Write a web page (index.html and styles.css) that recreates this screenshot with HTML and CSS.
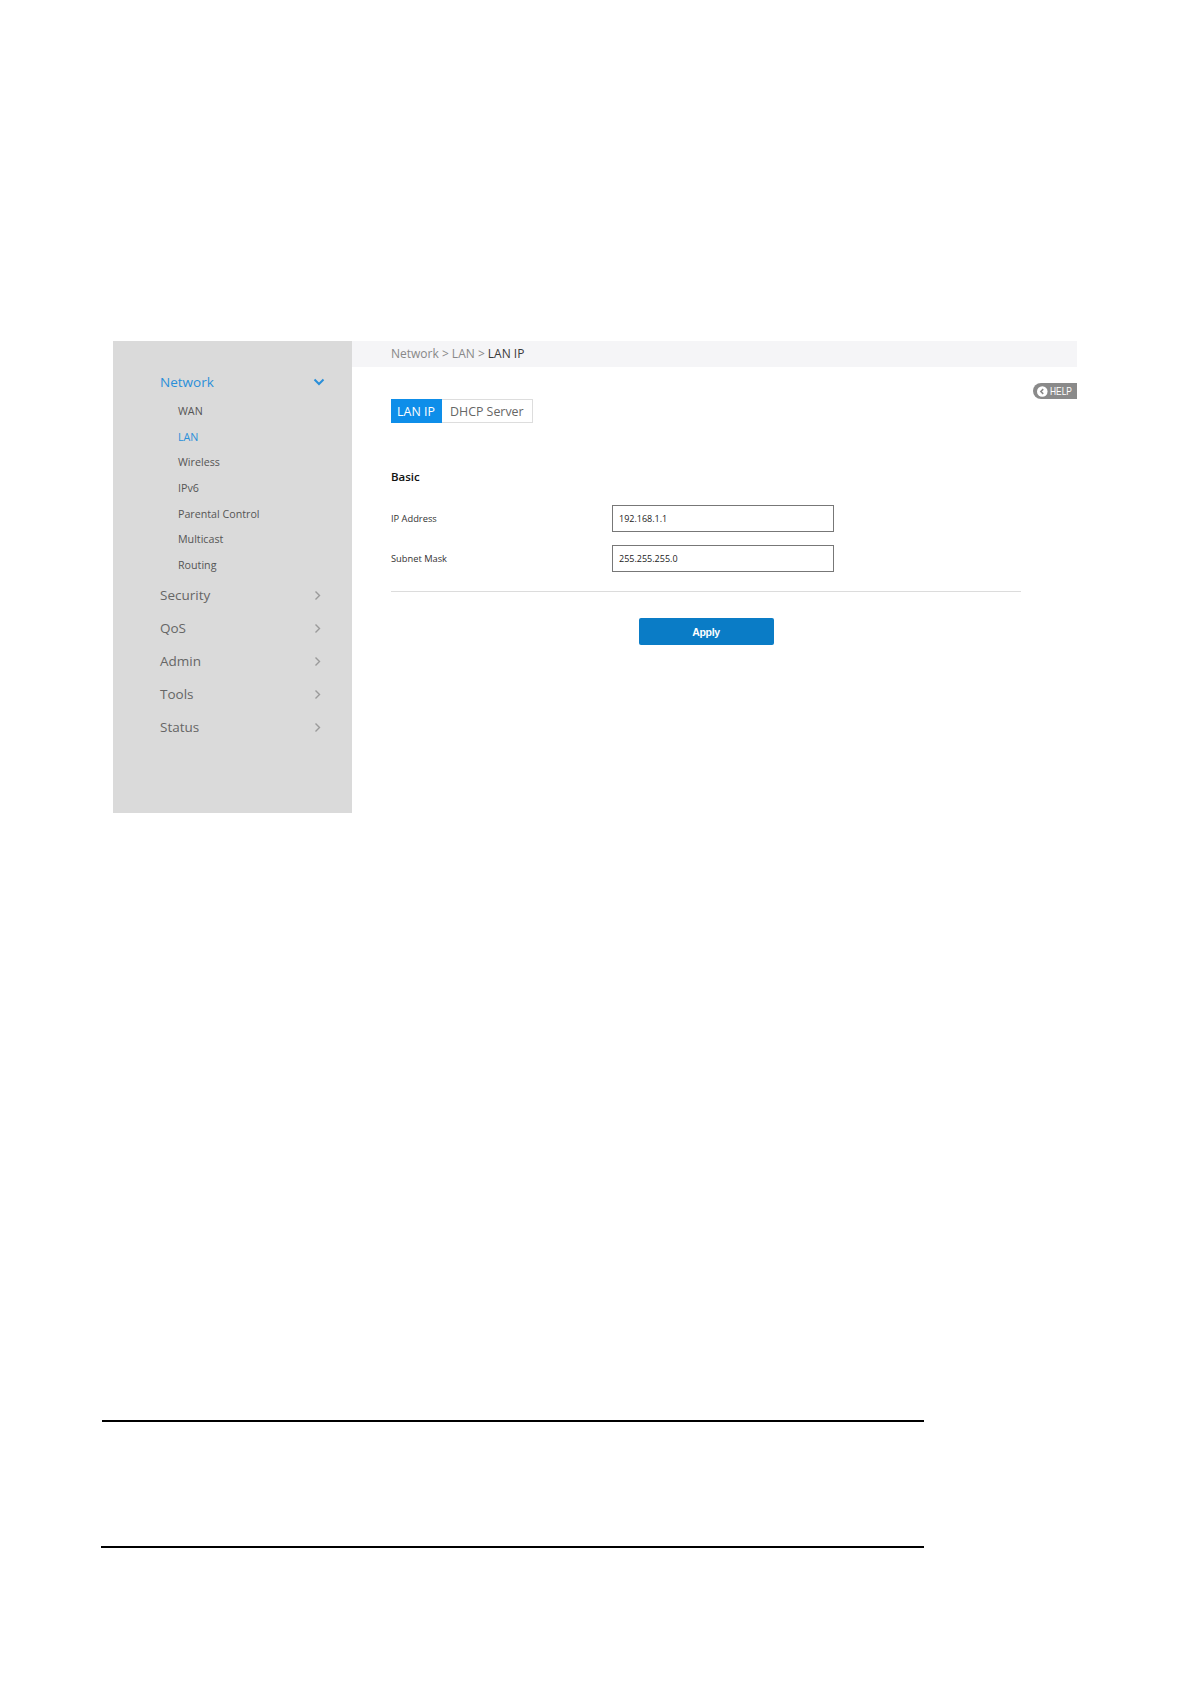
FILE: index.html
```html
<!DOCTYPE html>
<html>
<head>
<meta charset="utf-8">
<link rel="stylesheet" href="styles.css">
</head>
<body>
<div class="page">
  <div class="ui">
    <nav class="sidebar">
      <div class="menu-head active">
        <span>Network</span>
        <svg class="chev-down" width="12" height="8" viewBox="0 0 12 8"><path d="M1.5 1.5 L6 6 L10.5 1.5" fill="none" stroke="#2a8fd9" stroke-width="2"/></svg>
      </div>
      <ul class="submenu">
        <li>WAN</li>
        <li class="sel">LAN</li>
        <li>Wireless</li>
        <li>IPv6</li>
        <li>Parental Control</li>
        <li>Multicast</li>
        <li>Routing</li>
      </ul>
      <div class="menu-head"><span>Security</span><svg class="chev-right" width="7" height="11" viewBox="0 0 7 11"><path d="M1.5 1.5 L5.5 5.5 L1.5 9.5" fill="none" stroke="#9a9a9a" stroke-width="1.4"/></svg></div>
      <div class="menu-head"><span>QoS</span><svg class="chev-right" width="7" height="11" viewBox="0 0 7 11"><path d="M1.5 1.5 L5.5 5.5 L1.5 9.5" fill="none" stroke="#9a9a9a" stroke-width="1.4"/></svg></div>
      <div class="menu-head"><span>Admin</span><svg class="chev-right" width="7" height="11" viewBox="0 0 7 11"><path d="M1.5 1.5 L5.5 5.5 L1.5 9.5" fill="none" stroke="#9a9a9a" stroke-width="1.4"/></svg></div>
      <div class="menu-head"><span>Tools</span><svg class="chev-right" width="7" height="11" viewBox="0 0 7 11"><path d="M1.5 1.5 L5.5 5.5 L1.5 9.5" fill="none" stroke="#9a9a9a" stroke-width="1.4"/></svg></div>
      <div class="menu-head"><span>Status</span><svg class="chev-right" width="7" height="11" viewBox="0 0 7 11"><path d="M1.5 1.5 L5.5 5.5 L1.5 9.5" fill="none" stroke="#9a9a9a" stroke-width="1.4"/></svg></div>
    </nav>
    <main class="main">
      <div class="crumb">Network &gt; LAN &gt; <span class="crumb-last">LAN IP</span></div>
      <div class="content">
        <div class="help">
          <svg width="11" height="11" viewBox="0 0 11 11"><circle cx="5.5" cy="5.5" r="5.5" fill="#fff"/><path d="M6.5 3 L4 5.5 L6.5 8" fill="none" stroke="#8a8a8a" stroke-width="1.6"/></svg>
          <span class="help-text">HELP</span>
        </div>
        <div class="tabs">
          <div class="tab on">LAN IP</div>
          <div class="tab">DHCP Server</div>
        </div>
        <h3 class="section">Basic</h3>
        <div class="row">
          <label class="label">IP Address</label>
          <div class="input">192.168.1.1</div>
        </div>
        <div class="row">
          <label class="label">Subnet Mask</label>
          <div class="input">255.255.255.0</div>
        </div>
        <div class="divider"></div>
        <div class="actions">
          <button class="apply">Apply</button>
        </div>
      </div>
    </main>
  </div>
  <div class="rule rule-top"></div>
  <div class="rule rule-bottom"></div>
</div>
</body>
</html>
```

FILE: styles.css
```css
* { box-sizing: border-box; }
html, body { margin: 0; padding: 0; background: #fff; }
body { font-family: "Open Sans", "Liberation Sans", sans-serif; color: #555; }

.page { padding-top: 341px; }

.ui {
  display: flex;
  margin-left: 113px;
  width: 964px;
  height: 472px;
}

.sidebar {
  width: 239px;
  background: #dadada;
  padding: 24px 27px 0 47px;
}
.menu-head {
  display: flex;
  align-items: center;
  justify-content: space-between;
  height: 33px;
  font-size: 13.5px;
  color: #666;
  padding-right: 4px;
}
.menu-head.active {
  height: 34px;
  color: #2a8fd9;
  padding-right: 0;
}
.submenu {
  list-style: none;
  margin: 0;
  padding: 0 0 0 18px;
}
.submenu li {
  height: 25.7px;
  line-height: 25.7px;
  font-size: 10.7px;
  color: #555;
}
.submenu li.sel { color: #2a8fd9; }

.main {
  flex: 1;
  display: flex;
  flex-direction: column;
}
.crumb {
  height: 26px;
  line-height: 26px;
  background: #f5f5f7;
  padding-left: 39px;
  font-size: 12px;
  color: #888;
}
.crumb-last { color: #3a3a3a; }

.content {
  position: relative;
  padding: 32px 0 0 39px;
}
.help {
  position: absolute;
  top: 16px;
  right: 0;
  width: 44px;
  height: 16px;
  background: #8a8a8a;
  border-radius: 8px 0 0 8px;
  display: flex;
  align-items: center;
  gap: 2px;
  padding-left: 4px;
  color: #fff;
  font-size: 10.5px;
  font-family: "Liberation Sans", sans-serif;
  overflow: hidden;
}
.help-text {
  display: inline-block;
  transform: scaleX(0.8);
  transform-origin: left center;
}

.tabs {
  display: flex;
  height: 24px;
}
.tab {
  display: flex;
  align-items: center;
  padding: 0 8px;
  font-size: 12.4px;
  color: #666;
  border: 1px solid #ddd;
  border-left: none;
}
.tab.on {
  background: #0e8ee9;
  border-color: #0e8ee9;
  color: #fff;
  width: 51px;
  padding: 0;
  justify-content: center;
}
.section {
  margin: 46px 0 20px;
  font-size: 11.5px;
  font-weight: 600;
  color: #111;
  line-height: 16px;
}
.row {
  display: flex;
  align-items: center;
  height: 27px;
}
.row + .row { margin-top: 13px; }
.label {
  width: 221px;
  font-size: 9.3px;
  color: #333;
}
.input {
  width: 222px;
  height: 27px;
  border: 1px solid #777;
  padding-left: 6px;
  display: flex;
  align-items: center;
  font-size: 9px;
  color: #222;
}
.divider {
  width: 630px;
  border-top: 1px solid #dcdcdc;
  margin-top: 19px;
}
.actions {
  width: 630px;
  display: flex;
  justify-content: center;
  padding-top: 26px;
}
.apply {
  width: 135px;
  height: 27px;
  border: none;
  border-radius: 2px;
  background: #0a7cc6;
  color: #fff;
  font-family: "Liberation Sans", sans-serif;
  font-weight: bold;
  font-size: 10.5px;
  letter-spacing: -0.3px;
}

.rule {
  border-top: 2px solid #000;
  width: 822px;
}
.rule-top { margin: 607px 0 0 102px; }
.rule-bottom { margin: 124px 0 0 101px; width: 823px; }
```
